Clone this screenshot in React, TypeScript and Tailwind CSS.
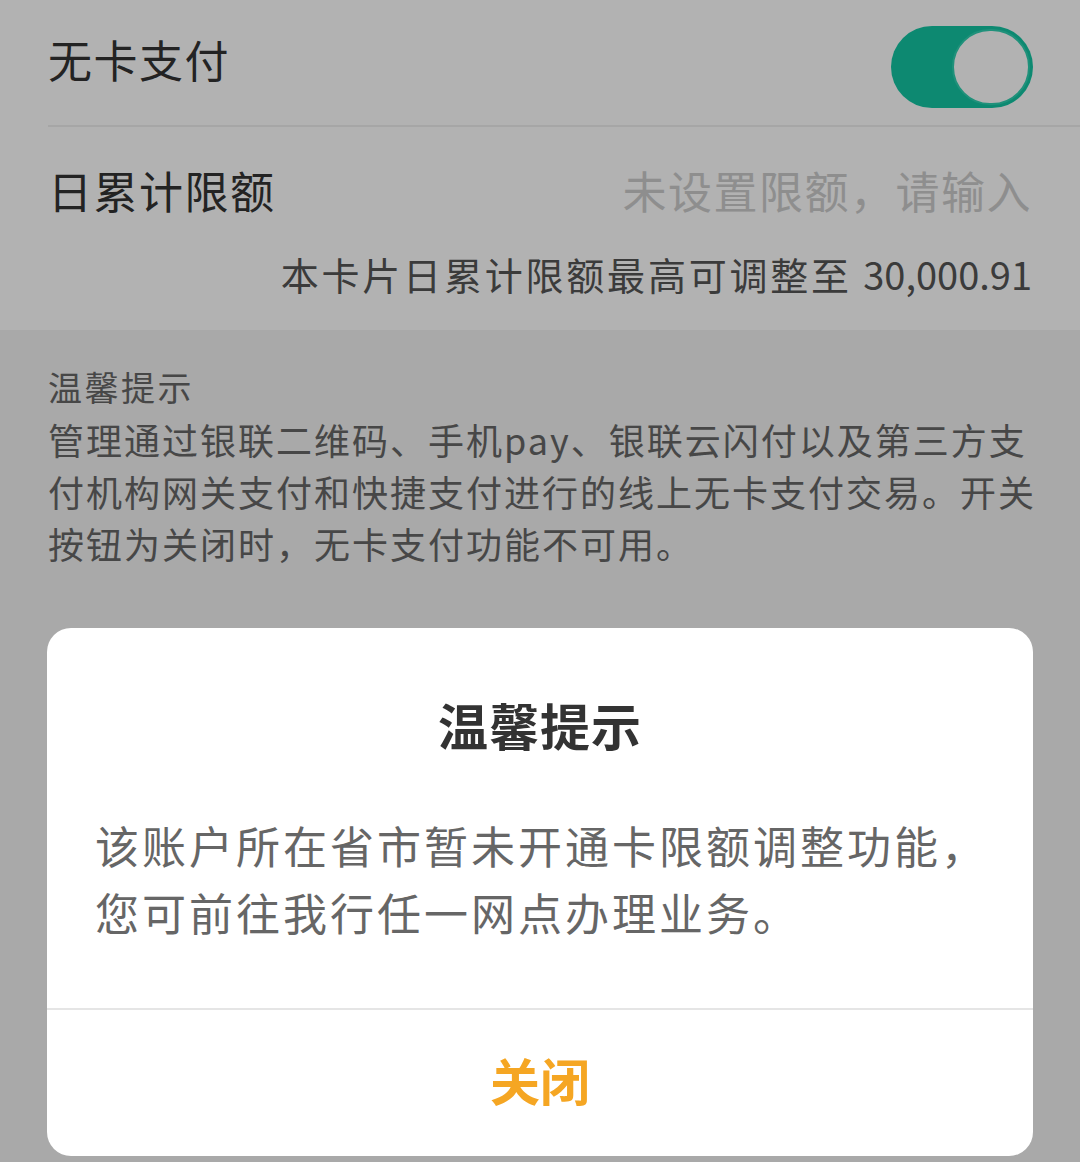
const font = { fontFamily: '"Noto Sans CJK SC", "Noto Sans", sans-serif' };

function Toggle() {
  return (
    <div className="w-[142px] h-[82px] rounded-full bg-[#13c5a3] flex items-center justify-end p-[3px] mt-[8px]">
      <div className="w-[78px] h-[76px] rounded-full bg-white border-2 border-[#2fd0b0]" />
    </div>
  );
}

export default function App() {
  return (
    <div className="relative w-[1080px] h-[1162px] overflow-hidden bg-[#f2f2f2]" style={font}>
      <div className="bg-white h-[330px]">
        <div className="ml-[48px] h-[127px] border-b-2 border-[#eeeeee] flex items-center justify-between pr-[47px]">
          <span className="text-[44px] leading-[56px] tracking-[1.5px] text-[#333] -mt-[8px]">无卡支付</span>
          <Toggle />
        </div>
        <div className="px-[48px]">
          <div className="h-[126px] flex items-center justify-between">
            <span className="text-[44px] leading-[56px] tracking-[1.5px] text-[#333]">日累计限额</span>
            <span className="text-[44px] leading-[56px] tracking-[1.5px] text-[#cccccc]">未设置限额，请输入</span>
          </div>
          <div className="mt-[2px] text-right whitespace-nowrap text-[38px] leading-[38px] tracking-[2.8px] text-[#555]">
            本卡片日累计限额最高可调整至 <span className="tracking-normal">30,000.91</span>
          </div>
        </div>
      </div>

      <div className="px-[48px] pt-[36px]">
        <div className="text-[34px] leading-[42px] tracking-[2.5px] text-[#666]">温馨提示</div>
        <div className="mt-[5px] whitespace-nowrap text-[36px] leading-[52px] tracking-[2px] text-[#666]">
          <div>管理通过银联二维码、手机pay、银联云闪付以及第三方支</div>
          <div>付机构网关支付和快捷支付进行的线上无卡支付交易。开关</div>
          <div>按钮为关闭时，无卡支付功能不可用。</div>
        </div>
      </div>

      <div className="absolute inset-0 bg-black/30" />

      <div className="absolute left-[47px] top-[628px] w-[986px] rounded-[24px] bg-white overflow-hidden">
        <div className="pt-[66px] text-center text-[50px] leading-[60px] tracking-[1px] font-bold text-[#333]">温馨提示</div>
        <div className="mt-[58px] pl-[48px] pr-[30px] pb-[62px] whitespace-nowrap text-[44px] leading-[67px] tracking-[3px] text-[#666]">
          <div>该账户所在省市暂未开通卡限额调整功能，</div>
          <div>您可前往我行任一网点办理业务。</div>
        </div>
        <div className="border-t-2 border-[#e5e5e5] h-[148px] flex items-center justify-center pb-[8px]">
          <span className="text-[50px] leading-[60px] font-bold text-[#f5a623]">关闭</span>
        </div>
      </div>
    </div>
  );
}
